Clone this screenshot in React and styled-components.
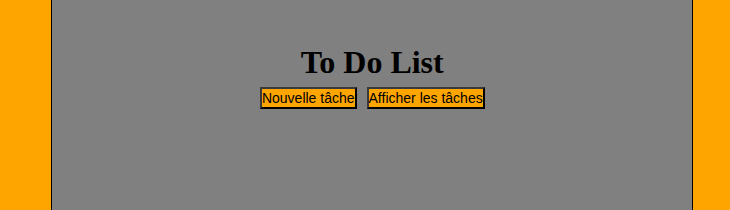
import React from 'react'
import styled, { createGlobalStyle } from 'styled-components'

const GlobalStyle = createGlobalStyle`
    html, body {
        margin: 0;
        height: 100%;
        background-color: orange;
    }
    #root {
        height: 100%;
    }
`

const Container = styled.div`
    box-sizing: border-box;
    width: 88%;
    min-height: 100%;
    margin-left: 7%;
    background-color: gray;
    border-left: 1px solid black;
    border-right: 1px solid black;
    text-align: center;
    padding-top: 24px;
`

const Title = styled.h1`
    font-family: "Liberation Serif", "Times New Roman", serif;
    font-size: 32px;
    font-weight: bold;
    margin: 20px 0 6px;
`

const ButtonRow = styled.div`
    display: flex;
    justify-content: center;
    gap: 10px;
`

const Button = styled.button`
    font-family: "Liberation Sans", Arial, sans-serif;
    font-size: 14px;
    color: black;
    background-color: orange;
    border: 2px solid;
    border-color: #3a3a3a #000 #000 #3a3a3a;
    padding: 1px 0;
    cursor: pointer;
`

const App = () => {
    return (
        <>
            <GlobalStyle/>
            <Container>
                <Title>To Do List</Title>
                <ButtonRow>
                    <Button>Nouvelle tâche</Button>
                    <Button>Afficher les tâches</Button>
                </ButtonRow>
            </Container>
        </>
    )
}

export default App
